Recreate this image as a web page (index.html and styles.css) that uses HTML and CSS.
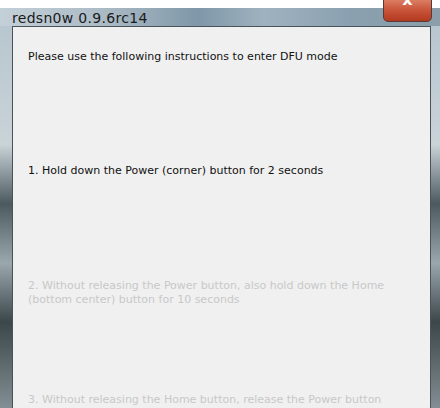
FILE: index.html
```html
<!DOCTYPE html>
<html lang="en">
<head>
    <meta charset="UTF-8">
    <title>redsn0w 0.9.6rc14</title>
    <link rel="stylesheet" href="styles.css">
</head>
<body>
    <div class="window">
        <div class="titlebar">
            <span class="title">redsn0w 0.9.6rc14</span>
            <div class="close">x</div>
        </div>
        <div class="frame">
            <div class="panel">
                <p class="line intro">Please use the following instructions to enter DFU mode</p>
                <p class="line step1">1. Hold down the Power (corner) button for 2 seconds</p>
                <p class="line step2 dim">2. Without releasing the Power button, also hold down the Home<br>(bottom center) button for 10 seconds</p>
                <p class="line step3 dim">3. Without releasing the Home button, release the Power button<br>BUT KEEP holding the Home button for 15 seconds</p>
            </div>
        </div>
    </div>
</body>
</html>
```

FILE: styles.css
```css
body {
    margin: 0;
    background: #fff;
    width: 440px;
    height: 408px;
    overflow: hidden;
}
.window {
    margin-top: 8px;
    height: 400px;
    display: flex;
    flex-direction: column;
}
.titlebar {
    height: 23px;
    display: flex;
    align-items: center;
    padding-left: 12px;
    background: linear-gradient(to right, #c4d0d8 0%, #a9b9c4 25%, #7f97a8 45%, #9fb2bf 60%, #8aa0b0 80%, #8b9ea9 100%);
}
.title {
    font-family: "DejaVu Sans", sans-serif;
    font-size: 14px;
    letter-spacing: 0.3px;
    color: #1a1a1a;
    padding-top: 2px;
}
.close {
    align-self: flex-start;
    margin-left: auto;
    margin-right: 8px;
    margin-top: -16px;
    width: 49px;
    height: 30px;
    box-sizing: border-box;
    border: 1px solid #5a3a35;
    border-radius: 0 0 5px 5px;
    background: linear-gradient(to bottom, #e89a80, #c9553a 60%, #b23a20);
    color: #fff;
    font-family: "DejaVu Sans", sans-serif;
    font-weight: bold;
    font-size: 16px;
    text-align: center;
    line-height: 14px;
}
.frame {
    flex: 1;
    display: flex;
    padding: 0 9px 0 12px;
    background: linear-gradient(to bottom, #b8c6cf 0%, #c9d3d8 30%, #4c5a60 45%, #9aa7ad 60%, #3c474b 75%, #8d999e 100%);
}
.panel {
    flex: 1;
    background: #f0f0f0;
    border: 1px solid #4a5357;
    border-bottom: none;
    padding-left: 15px;
}
.line {
    margin: 0;
    font-family: "DejaVu Sans", sans-serif;
    font-size: 11px;
    line-height: 14px;
    color: #111;
}
.intro {
    margin-top: 23px;
}
.step1 {
    margin-top: 100px;
}
.step2 {
    margin-top: 101px;
}
.step3 {
    margin-top: 86px;
}
.dim {
    color: #c8c8c8;
}
```
